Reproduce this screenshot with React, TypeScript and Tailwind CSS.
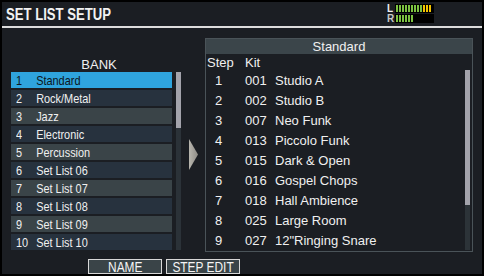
import React from "react";

const banks = [
  "Standard",
  "Rock/Metal",
  "Jazz",
  "Electronic",
  "Percussion",
  "Set List 06",
  "Set List 07",
  "Set List 08",
  "Set List 09",
  "Set List 10",
];

const steps: [string, string, string][] = [
  ["1", "001", "Studio A"],
  ["2", "002", "Studio B"],
  ["3", "007", "Neo Funk"],
  ["4", "013", "Piccolo Funk"],
  ["5", "015", "Dark & Open"],
  ["6", "016", "Gospel Chops"],
  ["7", "018", "Hall Ambience"],
  ["8", "025", "Large Room"],
  ["9", "027", "12\"Ringing Snare"],
];

const sans = { fontFamily: '"Liberation Sans", Arial, sans-serif' };

function Meter({ label, green, yellow, color }: { label: string; green: number; yellow: number; color: string }) {
  const bars = Array.from({ length: 12 }, (_, i) => i);
  return (
    <div className="flex items-start h-[10px]">
      <span
        className={"w-[8px] h-[9px] text-[10px] font-bold leading-[9px] overflow-hidden " + color}
        style={sans}
      >
        {label}
      </span>
      <div className="flex h-[9px] w-[39px] bg-black pl-[1px] gap-[1px] py-[1px]">
        {bars.map((i) => (
          <div
            key={i}
            className={
              "w-[2px] " +
              (i < green ? "bg-[#7cc242]" : i < green + yellow ? "bg-[#f5c400]" : "bg-black")
            }
          />
        ))}
      </div>
    </div>
  );
}

export default function App() {
  return (
    <div className="w-[484px] h-[276px] bg-black p-[2px]">
      <div className="w-[480px] h-[272px] bg-[#1b1e23] flex flex-col">
        {/* Header */}
        <div className="h-[24px] flex items-center pl-[4px] pt-[2px]">
          <span
            className="text-[16px] font-bold text-[#f2f2f2] leading-none whitespace-nowrap scale-x-[0.82] origin-left inline-block"
            style={sans}
          >
            SET LIST SETUP
          </span>
          <div className="ml-auto mr-[48px] flex flex-col -mt-[2px]">
            <Meter label="L" green={9} yellow={3} color="text-[#f0f0f0]" />
            <Meter label="R" green={6} yellow={0} color="text-[#c8c8c8]" />
          </div>
        </div>
        <div className="h-[2px] bg-[#dcdcdc]" />

        {/* Body */}
        <div className="flex h-[224px] pl-[9px]">
          {/* Left column */}
          <div className="w-[170px] flex flex-col pt-[28px]">
            <div className="h-[16px] flex items-center justify-center pl-[6px]">
              <span className="text-[13px] text-[#f0f0f0] leading-none" style={sans}>
                BANK
              </span>
            </div>
            <div className="flex gap-[4px]">
              <div className="w-[161px] flex flex-col gap-[2px]">
                {banks.map((b, i) => {
                  const sel = i === 0;
                  const bg = sel ? "bg-[#2fa4dd]" : i % 2 === 1 ? "bg-[#27323e]" : "bg-[#3a4448]";
                  const fg = sel ? "text-[#0c1620]" : "text-[#f0f0f0]";
                  return (
                    <div key={b} className={"h-[16px] flex items-center pl-[5px] " + bg}>
                      <div
                        className={"flex items-center text-[13px] leading-none whitespace-nowrap scale-x-[0.84] origin-left " + fg}
                        style={sans}
                      >
                        <span className="w-[24px]">{i + 1}</span>
                        <span>{b}</span>
                      </div>
                    </div>
                  );
                })}
              </div>
              <div className="w-[5px] h-[178px] bg-[#2b3238] flex flex-col">
                <div className="h-[56px] bg-[#a3a3ab]" />
              </div>
            </div>
          </div>

          {/* Arrow */}
          <div className="w-[24px] flex justify-center pt-[111px] pl-[1px]">
            <svg width="9" height="31" viewBox="0 0 9 31">
              <defs>
                <linearGradient id="tri" x1="0" y1="0" x2="1" y2="0">
                  <stop offset="0" stopColor="#b8b6ae" />
                  <stop offset="1" stopColor="#8e8c86" />
                </linearGradient>
              </defs>
              <polygon points="0,0 9,15.5 0,31" fill="url(#tri)" />
            </svg>
          </div>

          {/* Right panel */}
          <div className="mt-[10px] w-[268px] h-[214px] border border-[#4a5358] flex flex-col">
            <div className="h-[15px] bg-[#3b454a] flex items-center justify-center">
              <span className="text-[13px] text-[#f0f0f0] leading-none" style={sans}>
                Standard
              </span>
            </div>
            <div className="h-[16px] flex items-center pl-[1px]">
              <span className="w-[38px] text-[13px] text-[#f0f0f0] leading-none" style={sans}>
                Step
              </span>
              <span className="text-[13px] text-[#f0f0f0] leading-none" style={sans}>
                Kit
              </span>
            </div>
            <div className="flex">
              <div className="flex-1 flex flex-col pl-[1px]">
                {steps.map(([s, k, n]) => (
                  <div key={s} className="h-[20px] flex items-center text-[13px] text-[#f0f0f0] leading-none whitespace-nowrap" style={sans}>
                    <span className="w-[38px] pl-[8px]">{s}</span>
                    <span className="w-[30px]">{k}</span>
                    <span>{n}</span>
                  </div>
                ))}
              </div>
              <div className="w-[5px] h-[180px] bg-[#2c3338] mr-[2px] flex flex-col">
                <div className="h-[135px] bg-[#a3a3ab]" />
              </div>
            </div>
          </div>
        </div>

        {/* Buttons */}
        <div className="flex gap-[4px] pl-[86px] mt-[7px]">
          {["NAME", "STEP EDIT"].map((t) => (
            <div
              key={t}
              className="w-[74px] h-[15px] border border-[#d8d8d8] bg-[#3a4448] flex items-center justify-center overflow-hidden"
            >
              <span
                className="text-[14px] text-[#f4f4f4] leading-none whitespace-nowrap inline-block scale-x-[0.85]"
                style={sans}
              >
                {t}
              </span>
            </div>
          ))}
        </div>
      </div>
    </div>
  );
}
